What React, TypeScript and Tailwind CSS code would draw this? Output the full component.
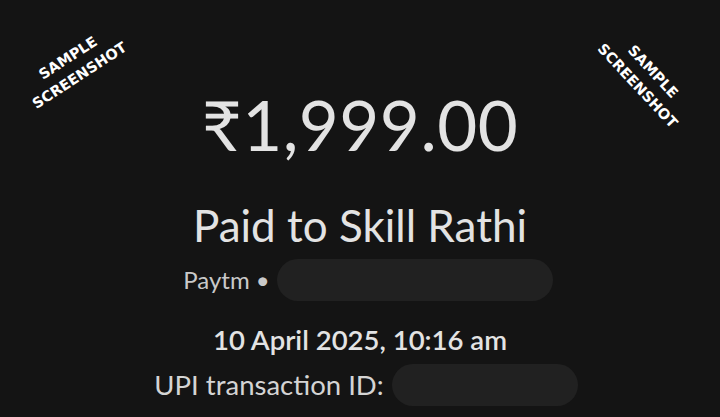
export default function App() {
  return (
    <div className="relative w-[720px] h-[417px] overflow-hidden bg-[#141414] text-[#e3e3e3] font-['Lato',sans-serif]">
      {/* watermarks */}
      <div className="absolute left-[74px] top-[67px] -translate-x-1/2 -translate-y-1/2 -rotate-[33deg] text-center text-[14.5px] leading-[21px] font-bold text-white font-['DejaVu_Sans',sans-serif]">
        <div>SAMPLE</div>
        <div>SCREENSHOT</div>
      </div>
      <div className="absolute left-[645px] top-[79px] -translate-x-1/2 -translate-y-1/2 rotate-[47deg] text-center text-[14.5px] leading-[21px] font-bold text-white font-['DejaVu_Sans',sans-serif]">
        <div>SAMPLE</div>
        <div>SCREENSHOT</div>
      </div>

      <div className="flex flex-col items-center pt-[83px]">
        <div className="text-[69px] leading-[84px] tracking-[0.5px]">₹1,999.00</div>
        <div className="mt-[32px] text-[44px] leading-[52px]">Paid to Skill Rathi</div>
        <div className="mt-[8px] flex items-center pl-[16px]">
          <span className="text-[24px] text-[#c9c9c9]">Paytm •</span>
          <span className="ml-[7px] w-[276px] h-[42px] rounded-full bg-[#212121]" />
        </div>
        <div className="mt-[22px] text-[27.5px] leading-[34px] font-semibold">10 April 2025, 10:16 am</div>
        <div className="mt-[7px] flex items-center pl-[12px]">
          <span className="text-[27.5px] text-[#d4d4d4]">UPI transaction ID:</span>
          <span className="ml-[8px] w-[186px] h-[42px] rounded-full bg-[#212121]" />
        </div>
      </div>
    </div>
  );
}
